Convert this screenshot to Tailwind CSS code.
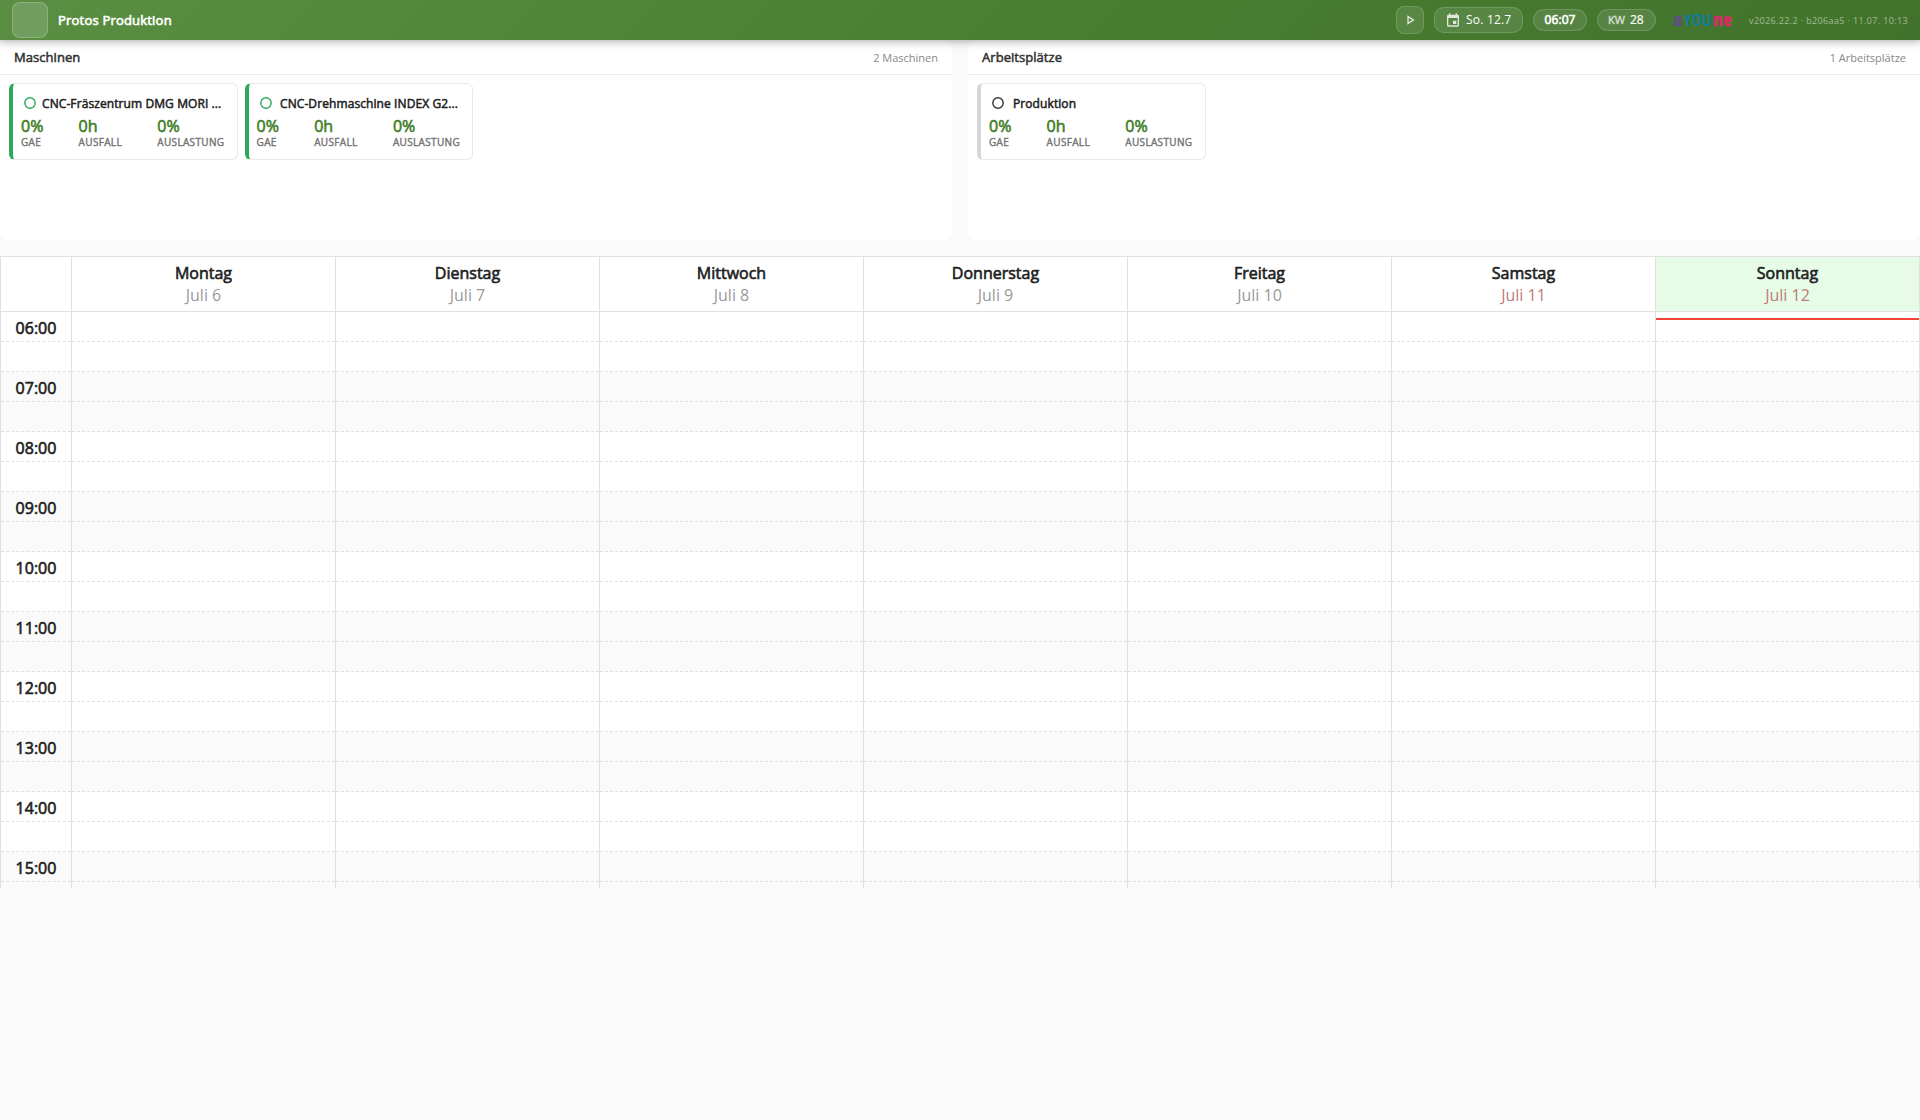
<!DOCTYPE html>
<html lang="de">
<head>
    <meta charset="UTF-8">
    <meta name="viewport" content="width=device-width, initial-scale=1.0">
    <title>Protos Produktion</title>
    <script src="https://cdn.jsdelivr.net/npm/@tailwindcss/browser@4"></script>
</head>
<body class="bg-[#fafafa] h-screen overflow-hidden font-['Open_Sans','Noto_Sans',sans-serif] text-[#212121]">
    <header class="relative z-10 h-10 px-3 flex items-center text-white bg-linear-135 from-[#5a8f43] via-[#4a8032] to-[#42722b] shadow-[0_2px_8px_rgba(0,0,0,0.3)]">
        <div class="size-9 rounded-lg border border-white/20 bg-white/15"></div>
        <h1 class="ml-2.5 text-[13px] leading-[18px] tracking-[0.2px] [-webkit-text-stroke:0.6px]">Protos Produktion</h1>
        <div class="ml-auto flex items-center text-xs leading-4">
            <button type="button" class="size-7 flex items-center justify-center rounded-lg border border-white/15 bg-white/10">
                <svg class="size-4 fill-white/80" viewBox="0 0 24 24"><path d="M10 8.64 15.27 12 10 15.36V8.64M8 5v14l11-7L8 5z"/></svg>
            </button>
            <div class="ml-2.5 w-[89px] h-[26px] pl-[10px] flex items-center gap-[5px] rounded-[10px] border border-white/15 bg-white/10">
                <svg class="size-4 fill-white/80" viewBox="0 0 24 24"><path d="M19 4h-1V2h-2v2H8V2H6v2H5c-1.11 0-1.99.9-1.99 2L3 20c0 1.1.89 2 2 2h14c1.1 0 2-.9 2-2V6c0-1.1-.9-2-2-2zm0 16H5V9h14v11zm-7-7h5v5h-5z"/></svg>
                <span class="tracking-[0.2px]">So. 12.7</span>
            </div>
            <div class="ml-2.5 w-[54px] h-[22px] flex items-center justify-center rounded-xl border border-white/15 bg-white/10 tracking-[0.1px] [-webkit-text-stroke:0.6px]">06:07</div>
            <div class="ml-2.5 w-[59px] h-[22px] pl-[10px] flex items-center gap-[5px] rounded-xl border border-white/15 bg-white/10">
                <span class="text-[11px] leading-4 text-white/65 [-webkit-text-stroke:0.4px]">KW</span>
                <span class="[-webkit-text-stroke:0.2px]">28</span>
            </div>
            <svg class="ml-[17px] w-[60px] h-8 font-bold" viewBox="0 0 60 32">
                <text x="0" y="22" font-size="17" textLength="9.5" lengthAdjust="spacingAndGlyphs" fill="#5f4b8b" stroke="#5f4b8b" stroke-width="0.4">a</text>
                <text x="10.5" y="22" font-size="16" textLength="28.5" lengthAdjust="spacingAndGlyphs" fill="#0f7c9f">YOU</text>
                <text x="40" y="22" font-size="17" textLength="19" lengthAdjust="spacingAndGlyphs" fill="#e0266b" stroke="#e0266b" stroke-width="0.4">ne</text>
            </svg>
            <span class="ml-4 mt-px text-[9px] leading-[13px] tracking-[0.37px] text-white/50">v2026.22.2 · b206aa5 · 11.07. 10:13</span>
        </div>
    </header>

    <main>
        <div class="grid grid-cols-2 gap-4">
            <section class="h-[200px] bg-white rounded-lg">
                <div class="h-[35px] px-3.5 flex items-center justify-between border-b border-[#eeeeee]">
                    <h2 class="text-[13px] leading-[18px] tracking-[0.05px] text-[#333] [-webkit-text-stroke:0.53px]">Maschinen</h2>
                    <span class="mt-px text-[11px] leading-[15px] text-[#888]">2 Maschinen</span>
                </div>
                <div class="flex gap-[7px] pt-2 pl-[9px]" id="machines"></div>
            </section>
            <section class="h-[200px] bg-white rounded-lg">
                <div class="h-[35px] px-3.5 flex items-center justify-between border-b border-[#eeeeee]">
                    <h2 class="text-[13px] leading-[18px] tracking-[0.05px] text-[#333] [-webkit-text-stroke:0.53px]">Arbeitsplätze</h2>
                    <span class="mt-px text-[11px] leading-[15px] text-[#888]">1 Arbeitsplätze</span>
                </div>
                <div class="flex gap-[7px] pt-2 pl-[9px]" id="workplaces"></div>
            </section>
        </div>

        <div class="relative mt-4 h-[632px] overflow-hidden">
            <table class="w-full table-fixed border-collapse bg-white">
                <thead>
                    <tr class="h-[55px]" id="days">
                        <th class="w-[71px] border border-[#e0e0e0]"></th>
                    </tr>
                </thead>
                <tbody id="slots"></tbody>
            </table>
            <!-- current time -->
            <div class="absolute top-[62px] left-[1656px] w-[263px] h-0.5 bg-[#f44336]"></div>
        </div>
    </main>

    <script>
        const stat = (label, value, width) => `
            <div class="${width} flex flex-col-reverse">
                <dt class="text-[10px] leading-3 tracking-[0.34px] text-[#757575] [-webkit-text-stroke:0.4px]">${label}</dt>
                <dd class="text-base leading-5 text-[#457f2b] [-webkit-text-stroke:0.62px]">${value}</dd>
            </div>`;

        const card = (name, bar, ring, gap) => `
            <article class="w-[228.6px] h-[77px] pl-2 pt-3 rounded-md border border-[#e8e8e8] border-l-4 ${bar}">
                <div class="flex items-center h-4 pl-[3px] ${gap}">
                    <svg class="size-3 shrink-0 -mt-0.5 fill-none ${ring}" viewBox="0 0 12 12"><circle cx="6" cy="6" r="5.2" stroke-width="1.4"/></svg>
                    <h3 class="text-xs leading-4 tracking-[0.09px] whitespace-nowrap [-webkit-text-stroke:0.5px]">${name}</h3>
                </div>
                <dl class="flex mt-1">
                    ${stat("GAE", "0%", "w-[57.6px]")}
                    ${stat("AUSFALL", "0h", "w-[78.7px]")}
                    ${stat("AUSLASTUNG", "0%", "w-[70px]")}
                </dl>
            </article>`;

        document.getElementById("machines").innerHTML =
            card("CNC-Fräszentrum DMG MORI ...", "border-l-[#2ea85c]", "stroke-[#2ea85c]", "gap-[6px]") +
            card("CNC-Drehmaschine INDEX G2...", "border-l-[#2ea85c]", "stroke-[#2ea85c]", "gap-[8.4px]");
        document.getElementById("workplaces").innerHTML =
            card("Produktion", "border-l-[#d6d6d6]", "stroke-[#333]", "gap-[9px]");

        // Header row
        const days = ["Montag", "Dienstag", "Mittwoch", "Donnerstag", "Freitag", "Samstag", "Sonntag"];
        days.forEach((day, i) => {
            const today = i === 6 ? "bg-[#e6fce6]" : "";
            const color = i > 4 ? "text-[#c07a78]" : "text-[#999]";
            document.getElementById("days").innerHTML += `
                <th class="border border-[#e0e0e0] p-0 text-base leading-[22px] font-normal ${today}">
                    <div class="[-webkit-text-stroke:0.62px]">${day}</div>
                    <div class="${color}">Juli ${6 + i}</div>
                </th>`;
        });

        // Half hour slots, every second hour is shaded
        let rows = "";
        for (let i = 0; i < 20; i++) {
            const hour = 6 + Math.floor(i / 2);
            const label = i % 2 ? "" : String(hour).padStart(2, "0") + ":00";
            const shade = hour % 2 ? "bg-[#fafafa]" : "";
            rows += `<tr class="h-[30px] ${shade}"><td class="p-0 pt-[3px] border border-[#e0e0e0] [border-block-style:dashed] text-center text-base leading-[22px] [-webkit-text-stroke:0.62px]">${label}</td>`;
            for (let d = 0; d < 7; d++) {
                rows += `<td class="p-0 border border-[#e0e0e0] [border-block-style:dashed]"></td>`;
            }
            rows += "</tr>";
        }
        document.getElementById("slots").innerHTML = rows;
    </script>
</body>
</html>
